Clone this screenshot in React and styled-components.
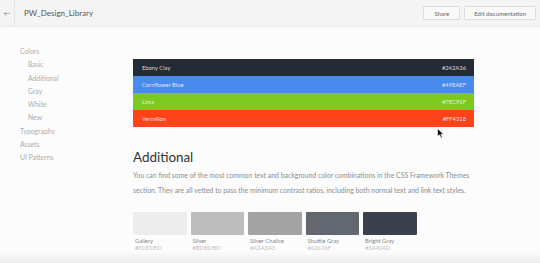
import styled, { createGlobalStyle } from 'styled-components'

const GlobalCSS = createGlobalStyle`
* {
  margin: 0;
  padding: 0;
  box-sizing: border-box;
}
body {
  font-family: 'Lato', 'Liberation Sans', sans-serif;
  background: #fcfcfc;
  width: 540px;
  height: 263px;
  overflow: hidden;
}
`

const Page = styled.div`
  position: relative;
  width: 540px;
  height: 263px;
  overflow: hidden;
  background: #fcfcfc;
`

const Header = styled.header`
  height: 27px;
  display: flex;
  align-items: center;
  background: #f4f4f4;
  border-bottom: 1px solid #e9e9e9;
`

const Back = styled.div`
  width: 15px;
  height: 100%;
  display: flex;
  align-items: center;
  justify-content: center;
  border-right: 1px solid #e6e6e6;
  color: #888;
  font-size: 7px;
`

const Title = styled.div`
  margin-left: 9px;
  font-size: 8px;
  color: #555;
  flex: 1;
`

const Actions = styled.div`
  display: flex;
  gap: 4px;
  margin-right: 4px;
`

const Btn = styled.button`
  height: 14px;
  padding: 0 ${p => p.$pad}px;
  border: 1px solid #dcdcdc;
  background: #f9f9f9;
  color: #666;
  font-family: inherit;
  font-size: 6px;
  border-radius: 1px;
`

const Body = styled.div`
  display: flex;
`

const Side = styled.nav`
  width: 133px;
  padding: 18px 0 0 20px;
`

const NavItem = styled.div`
  font-size: 6.8px;
  line-height: 13.3px;
  color: #adadad;
  padding-left: ${p => (p.$sub ? 8 : 0)}px;
`

const Main = styled.main`
  width: 341px;
  padding-top: 32px;
`

const Bars = styled.div`
  display: flex;
  flex-direction: column;
`

const Bar = styled.div`
  height: 17px;
  display: flex;
  align-items: center;
  justify-content: space-between;
  padding: 0 8px 0 9px;
  background: ${p => p.$bg};
  color: rgba(255, 255, 255, 0.82);
  font-size: 5.8px;
`

const Heading = styled.h2`
  margin-top: 21px;
  font-size: 13.4px;
  line-height: 18px;
  font-weight: 400;
  color: #333;
`

const Text = styled.p`
  margin-top: 2px;
  font-size: 6.9px;
  line-height: 15px;
  color: #8e8e8e;
`

const Swatches = styled.div`
  display: flex;
  gap: 4px;
  margin-top: 14px;
`

const Swatch = styled.div`
  width: 53.5px;
`

const Chip = styled.div`
  height: 23px;
  background: ${p => p.$bg};
  border-radius: 1px;
`

const Name = styled.div`
  margin-top: 2px;
  font-size: 5.8px;
  line-height: 7px;
  color: #888;
  padding-left: 2px;
`

const Hex = styled.div`
  font-size: 5.8px;
  line-height: 7px;
  color: #c2c2c2;
  padding-left: 2px;
`

const Fade = styled.div`
  position: absolute;
  left: 0;
  right: 0;
  bottom: 0;
  height: 12px;
  background: linear-gradient(to bottom, rgba(240, 240, 240, 0), #ececec);
`

const Cursor = styled.svg`
  position: absolute;
  left: 437px;
  top: 128px;
`

const bars = [
  ['Ebony Clay', '#242A36'],
  ['Cornflower Blue', '#498AEF'],
  ['Lima', '#7EC91F'],
  ['Vermilion', '#FF4318'],
]

const grays = [
  ['Gallery', '#EDEDED'],
  ['Silver', '#BDBDBD'],
  ['Silver Chalice', '#A3A3A3'],
  ['Shuttle Gray', '#63676F'],
  ['Bright Gray', '#3A404D'],
]

export default function App() {
  return (
    <>
      <GlobalCSS />
      <Page>
        <Header>
          <Back>←</Back>
          <Title>PW_Design_Library</Title>
          <Actions>
            <Btn $pad={10}>Share</Btn>
            <Btn $pad={9}>Edit documentation</Btn>
          </Actions>
        </Header>
        <Body>
          <Side>
            <NavItem>Colors</NavItem>
            <NavItem $sub>Basic</NavItem>
            <NavItem $sub>Additional</NavItem>
            <NavItem $sub>Gray</NavItem>
            <NavItem $sub>White</NavItem>
            <NavItem $sub>New</NavItem>
            <NavItem>Typography</NavItem>
            <NavItem>Assets</NavItem>
            <NavItem>UI Patterns</NavItem>
          </Side>
          <Main>
            <Bars>
              {bars.map(([n, c]) => (
                <Bar key={n} $bg={c}>
                  <span>{n}</span>
                  <span>{c}</span>
                </Bar>
              ))}
            </Bars>
            <Heading>Additional</Heading>
            <Text>
              You can find some of the most common text and background color combinations in the CSS Framework Themes
              section. They are all vetted to pass the minimum contrast ratios, including both normal text and link text styles.
            </Text>
            <Swatches>
              {grays.map(([n, c]) => (
                <Swatch key={n}>
                  <Chip $bg={c} />
                  <Name>{n}</Name>
                  <Hex>{c}</Hex>
                </Swatch>
              ))}
            </Swatches>
          </Main>
        </Body>
        <Fade />
        <Cursor width="8" height="11" viewBox="0 0 8 11">
          <path d="M0.5 0.5 L0.5 8.5 L2.5 6.8 L4 10 L5.3 9.4 L3.9 6.3 L6.6 6.2 Z" fill="#111" stroke="#fff" strokeWidth="0.6" />
        </Cursor>
      </Page>
    </>
  )
}
